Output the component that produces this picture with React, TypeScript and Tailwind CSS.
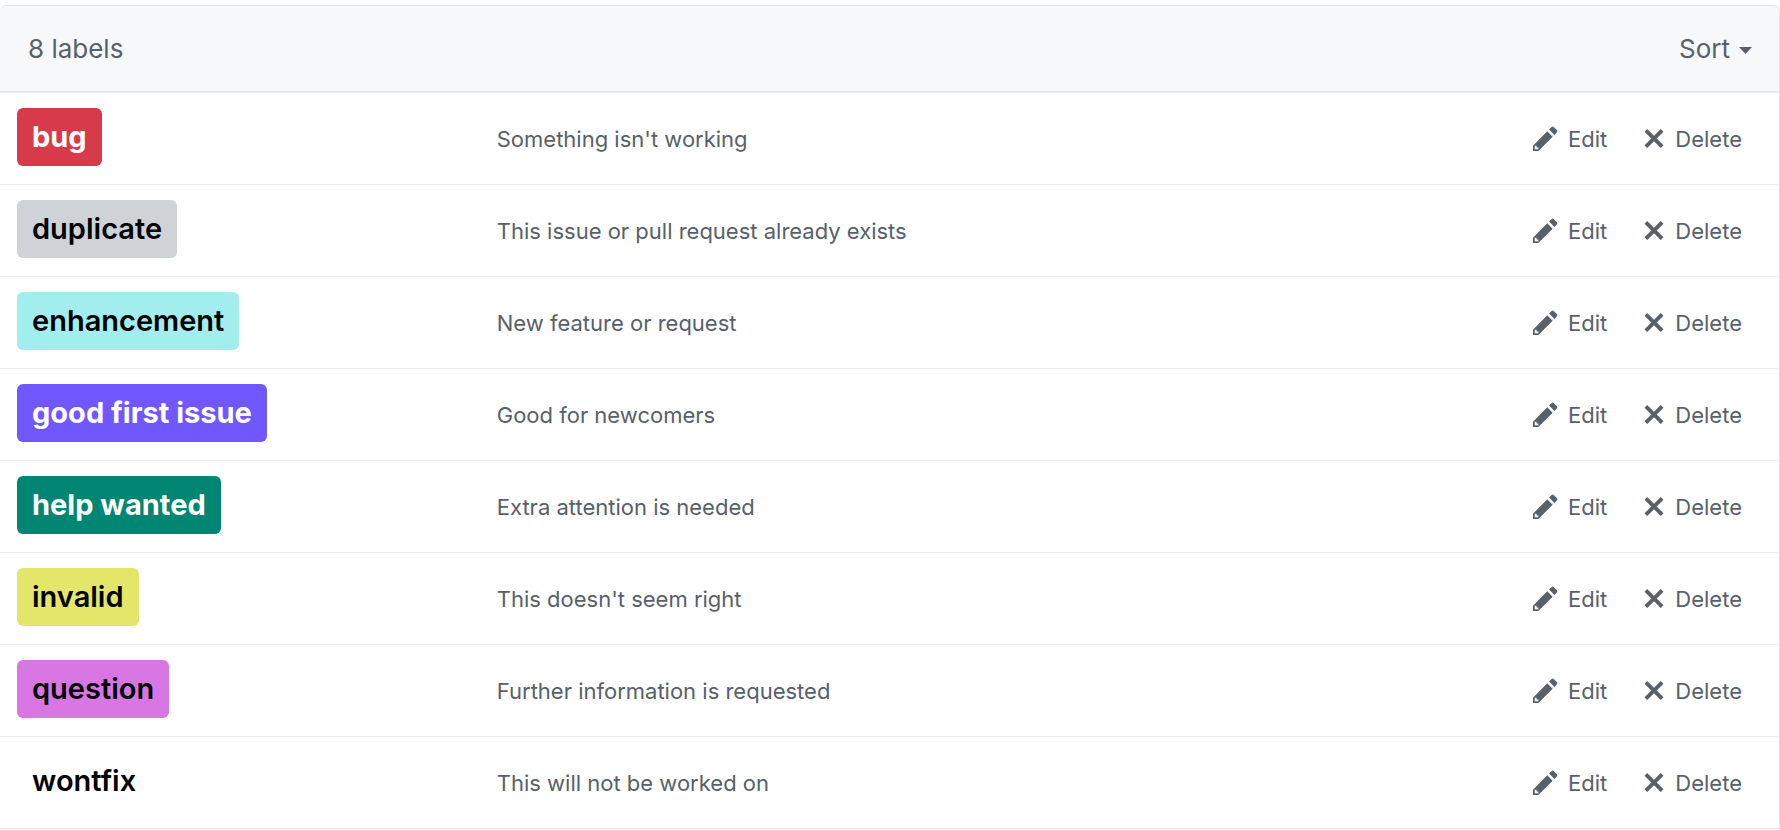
type Label = { name: string; description: string; color: string };

const labels: Label[] = [
  { name: 'bug', description: "Something isn't working", color: 'bg-[#d73a4a] font-bold text-white' },
  { name: 'duplicate', description: 'This issue or pull request already exists', color: 'bg-[#cfd3d7] font-semibold text-black' },
  { name: 'enhancement', description: 'New feature or request', color: 'bg-[#a2eeef] font-semibold text-black' },
  { name: 'good first issue', description: 'Good for newcomers', color: 'bg-[#7057ff] font-bold text-white' },
  { name: 'help wanted', description: 'Extra attention is needed', color: 'bg-[#008672] font-bold text-white' },
  { name: 'invalid', description: "This doesn't seem right", color: 'bg-[#e4e669] font-semibold text-black' },
  { name: 'question', description: 'Further information is requested', color: 'bg-[#d876e3] font-semibold text-black' },
  { name: 'wontfix', description: 'This will not be worked on', color: 'bg-white font-semibold text-black' },
];

function PencilIcon() {
  return (
    <svg className="h-[29px] w-[25px]" viewBox="0 0 14 16" fill="currentColor" aria-hidden="true">
      <path
        fillRule="evenodd"
        d="M0 12v3h3l8-8-3-3-8 8zm3 2H1v-2h1v1h1v1zm10.3-9.3L12 6 9 3l1.3-1.3a.996.996 0 0 1 1.41 0l1.59 1.59c.39.39.39 1.02 0 1.41z"
      />
    </svg>
  );
}

function CrossIcon() {
  return (
    <svg className="h-[29px] w-[22px]" viewBox="0 0 12 16" fill="currentColor" aria-hidden="true">
      <path
        fillRule="evenodd"
        d="M7.48 8l3.75 3.75-1.48 1.48L6 9.48l-3.75 3.75-1.48-1.48L4.52 8 .77 4.25l1.48-1.48L6 6.52l3.75-3.75 1.48 1.48z"
      />
    </svg>
  );
}

function LabelRow({ name, description, color }: Label) {
  return (
    <li className="flex h-[92px] items-center gap-[14px] border-t border-[#eaecef] pr-[37px] pl-[17px]">
      <div className="flex w-[27%] shrink-0 pb-[3px]">
        <a href="#" className={`rounded-md px-[15px] text-[29px] leading-[58px] whitespace-nowrap ${color}`}>
          {name}
        </a>
      </div>
      <p className="min-w-0 flex-1 text-[22px] leading-8">{description}</p>
      <div className="flex gap-9 text-[22px] leading-8">
        <button type="button" className="flex items-center gap-[10px]">
          <PencilIcon />
          Edit
        </button>
        <button type="button" className="flex items-center gap-[10px]">
          <CrossIcon />
          Delete
        </button>
      </div>
    </li>
  );
}

export default function App() {
  return (
    <main className="bg-white pt-[5px] pb-px font-[Inter,'Liberation_Sans',sans-serif] text-[#586069]">
      <section className="rounded-t-md border-r border-b border-[#e1e4e8]">
        <header className="flex h-[87px] items-center justify-between rounded-t-md border-t border-b border-[#e1e4e8] bg-[#f6f8fa] pr-[27px] pl-7 text-[26px]">
          <h1>8 labels</h1>
          <button type="button" className="flex items-center gap-[9px]">
            Sort
            <svg className="mt-1 h-[7px] w-[13px]" viewBox="0 0 13 7" fill="currentColor" aria-hidden="true">
              <path d="M0 0h13L6.5 7z" />
            </svg>
          </button>
        </header>
        <ul>
          {labels.map((label) => (
            <LabelRow key={label.name} {...label} />
          ))}
        </ul>
      </section>
    </main>
  );
}
